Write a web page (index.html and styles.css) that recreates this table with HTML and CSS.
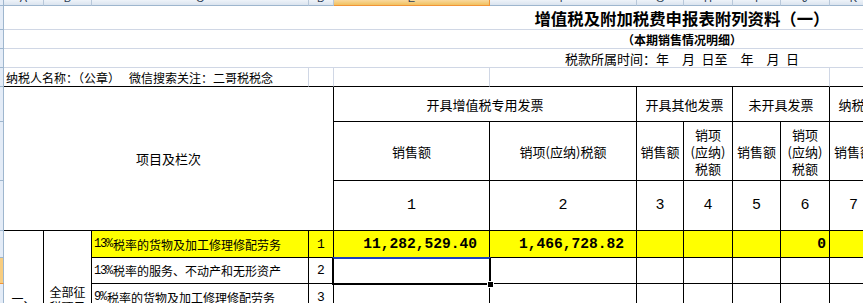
FILE: index.html
```html
<!DOCTYPE html>
<html lang="zh-CN">
<head>
<meta charset="utf-8">
<link rel="stylesheet" href="styles.css">
</head>
<body>
<div class="sheet">
  <div class="corner"></div>
  <div class="ch"><span>A</span></div>
  <div class="ch"><span>B</span></div>
  <div class="ch"><span>C</span></div>
  <div class="ch"><span>D</span></div>
  <div class="ch on"><span>E</span></div>
  <div class="ch"><span>F</span></div>
  <div class="ch"><span>G</span></div>
  <div class="ch"><span>H</span></div>
  <div class="ch"><span>I</span></div>
  <div class="ch"><span>J</span></div>
  <div class="ch"><span>K</span></div>
  <div class="ch"><span>L</span></div>

  <div class="rh"></div>
  <div class="g top t1">增值税及附加税费申报表附列资料（一）</div>
  <div class="rh"></div>
  <div class="g top t2">（本期销售情况明细）</div>
  <div class="rh"></div>
  <div class="g top t3">税款所属时间：年<i class="sp2"></i>月<i class="sp1"></i>日至<i class="sp2"></i>年<i class="sp2"></i>月<i class="sp1"></i>日</div>

  <div class="rh"></div>
  <div class="g4 s3 name"><span>纳税人名称：（公章）</span><span class="gap">微信搜索关注：二哥税税念</span></div>
  <div class="g4"></div>
  <div class="g4"></div>
  <div class="g4 s5"></div>
  <div class="g4"></div>
  <div class="g4"></div>

  <div class="rh"></div>
  <div class="b hd item">项目及栏次</div>
  <div class="b hd s2">开具增值税专用发票</div>
  <div class="b hd s2">开具其他发票</div>
  <div class="b hd s2">未开具发票</div>
  <div class="b hd s2">纳税检查调整</div>

  <div class="rh"></div>
  <div class="b hd">销售额</div>
  <div class="b hd">销项(应纳)税额</div>
  <div class="b hd">销售额</div>
  <div class="b hd"><span class="wrap">销项<br>(应纳)<br>税额</span></div>
  <div class="b hd">销售额</div>
  <div class="b hd"><span class="wrap">销项<br>(应纳)<br>税额</span></div>
  <div class="b hd">销售额</div>
  <div class="b hd"><span class="wrap">销项<br>(应纳)<br>税额</span></div>

  <div class="rh"></div>
  <div class="b num">1</div>
  <div class="b num">2</div>
  <div class="b num">3</div>
  <div class="b num">4</div>
  <div class="b num">5</div>
  <div class="b num">6</div>
  <div class="b num">7</div>
  <div class="b num">8</div>

  <div class="rh"></div>
  <div class="b tall cat"><span>一、</span></div>
  <div class="b tall cat"><span class="wrap2">全部征<br>税项目</span></div>
  <div class="b y label"><span class="pct">13%</span>税率的货物及加工修理修配劳务</div>
  <div class="b y ln">1</div>
  <div class="b y val">11,282,529.40</div>
  <div class="b y val">1,466,728.82</div>
  <div class="b y"></div>
  <div class="b y"></div>
  <div class="b y"></div>
  <div class="b y val zero">0</div>
  <div class="b y"></div>
  <div class="b y"></div>

  <div class="rh on"></div>
  <div class="b label"><span class="pct">13%</span>税率的服务、不动产和无形资产</div>
  <div class="b ln">2</div>
  <div class="b"></div>
  <div class="b"></div>
  <div class="b"></div>
  <div class="b"></div>
  <div class="b"></div>
  <div class="b"></div>
  <div class="b"></div>
  <div class="b"></div>

  <div class="rh"></div>
  <div class="b label"><span class="pct">9%</span>税率的货物及加工修理修配劳务</div>
  <div class="b ln">3</div>
  <div class="b"></div>
  <div class="b"></div>
  <div class="b"></div>
  <div class="b"></div>
  <div class="b"></div>
  <div class="b"></div>
  <div class="b"></div>
  <div class="b"></div>

  <div class="rh"></div>
  <div class="b label"><span class="pct">9%</span>税率的服务、不动产和无形资产</div>
  <div class="b ln">4</div>
  <div class="b"></div>
  <div class="b"></div>
  <div class="b"></div>
  <div class="b"></div>
  <div class="b"></div>
  <div class="b"></div>
  <div class="b"></div>
  <div class="b"></div>

  <div class="rh"></div>
  <div class="b label"><span class="pct">6%</span>税率</div>
  <div class="b ln">5</div>
  <div class="b"></div>
  <div class="b"></div>
  <div class="b"></div>
  <div class="b"></div>
  <div class="b"></div>
  <div class="b"></div>
  <div class="b"></div>
  <div class="b"></div>

  <div class="selbox"><i class="handle"></i></div>
</div>
</body>
</html>
```

FILE: styles.css
```css
html, body {
  margin: 0;
  padding: 0;
  background: #fff;
  overflow: hidden;
}
body {
  width: 863px;
  height: 303px;
  font-family: "Noto Sans CJK SC", "Noto Sans", sans-serif;
  color: #000;
}
.sheet {
  position: relative;
  display: grid;
  grid-template-columns: 4px 40px 48px 217px 25px 156px 147px 47px 49px 48px 49px 48px 48px;
  grid-template-rows: 6px 24px 19px 19px 19px 35px 59px 50px 27px 26px 27px 27px 29px;
  width: max-content;
}
.sheet > div {
  box-sizing: border-box;
  min-width: 0;
  overflow: hidden;
  white-space: nowrap;
  display: flex;
  align-items: center;
}
.corner {
  background: #e4ecf7;
  border-right: 1px solid #9eb6ce;
  border-bottom: 1px solid #9eb6ce;
}
.sheet > .ch {
  background: linear-gradient(#eef3f9, #dbe4ef);
  border-right: 1px solid #b8c8da;
  border-bottom: 1px solid #9eb6ce;
  justify-content: center;
  align-items: flex-start;
  font: 11px "Liberation Sans", sans-serif;
  color: #2c3e55;
}
.ch span {
  display: block;
  line-height: 12px;
  margin-top: -8px;
}
.sheet > .ch.on {
  background: linear-gradient(#f9d99f, #f1c15f);
  border-bottom-color: #f29436;
  border-right-color: #f29436;
}
.rh {
  background: #e4ecf7;
  border-right: 1px solid #9eb6ce;
  border-bottom: 1px solid #9eb6ce;
}
.rh.on {
  background: #f8cd80;
  border-bottom-color: #f29436;
}
.g {
  border-bottom: 1px solid #d0d7e5;
}
.top {
  grid-column: span 12;
  justify-content: center;
  padding-left: 434px;
}
.t1 {
  font-size: 16.4px;
  font-weight: 700;
}
.t2 {
  font-size: 12px;
  font-weight: 700;
}
.t3 {
  font-size: 13px;
}
.sp1 {
  display: inline-block;
  width: 6.5px;
}
.sp2 {
  display: inline-block;
  width: 13px;
}
.g4 {
  border-right: 1px solid #d0d7e5;
  border-bottom: 1px solid #000;
}
.s2 { grid-column: span 2; }
.s3 { grid-column: span 3; }
.s5 { grid-column: span 5; }
.name {
  font-size: 12px;
  padding-left: 2px;
}
.name .gap {
  margin-left: 9px;
}
.b {
  border-right: 1px solid #000;
  border-bottom: 1px solid #000;
}
.hd {
  font-size: 13px;
  justify-content: center;
}
.item {
  grid-column: span 4;
  grid-row: span 3;
}
.wrap {
  display: block;
  text-align: center;
  line-height: 17px;
  white-space: nowrap;
}
.num {
  justify-content: center;
  font-family: "Liberation Mono", monospace;
  font-size: 15px;
}
.tall {
  grid-row: span 5;
}
.cat {
  font-size: 12px;
  justify-content: center;
}
.cat span {
  display: block;
  line-height: 15px;
}
.wrap2 {
  text-align: center;
  white-space: nowrap;
}
.y {
  background: #ffff00;
}
.label {
  font-size: 12px;
  padding-left: 2px;
}
.pct {
  font-family: "Liberation Mono", monospace;
  font-size: 12px;
  letter-spacing: -1.2px;
  margin-right: 1px;
}
.ln {
  justify-content: center;
  font-family: "Liberation Mono", monospace;
  font-size: 13px;
}
.val {
  justify-content: flex-end;
  padding-right: 12px;
  font-family: "Liberation Mono", monospace;
  font-weight: 700;
  font-size: 14.6px;
}
.val.zero {
  padding-right: 3px;
}
.sheet > .selbox {
  position: absolute;
  left: 332px;
  top: 257px;
  width: 159px;
  height: 28px;
  border: 2px solid #000;
  border-top-color: #1d3fbf;
  box-shadow: inset 0 0 0 1px #fff;
  overflow: visible;
}
.handle {
  position: absolute;
  right: -5px;
  bottom: -5px;
  width: 5px;
  height: 5px;
  background: #000;
  border: 1px solid #fff;
}
```
